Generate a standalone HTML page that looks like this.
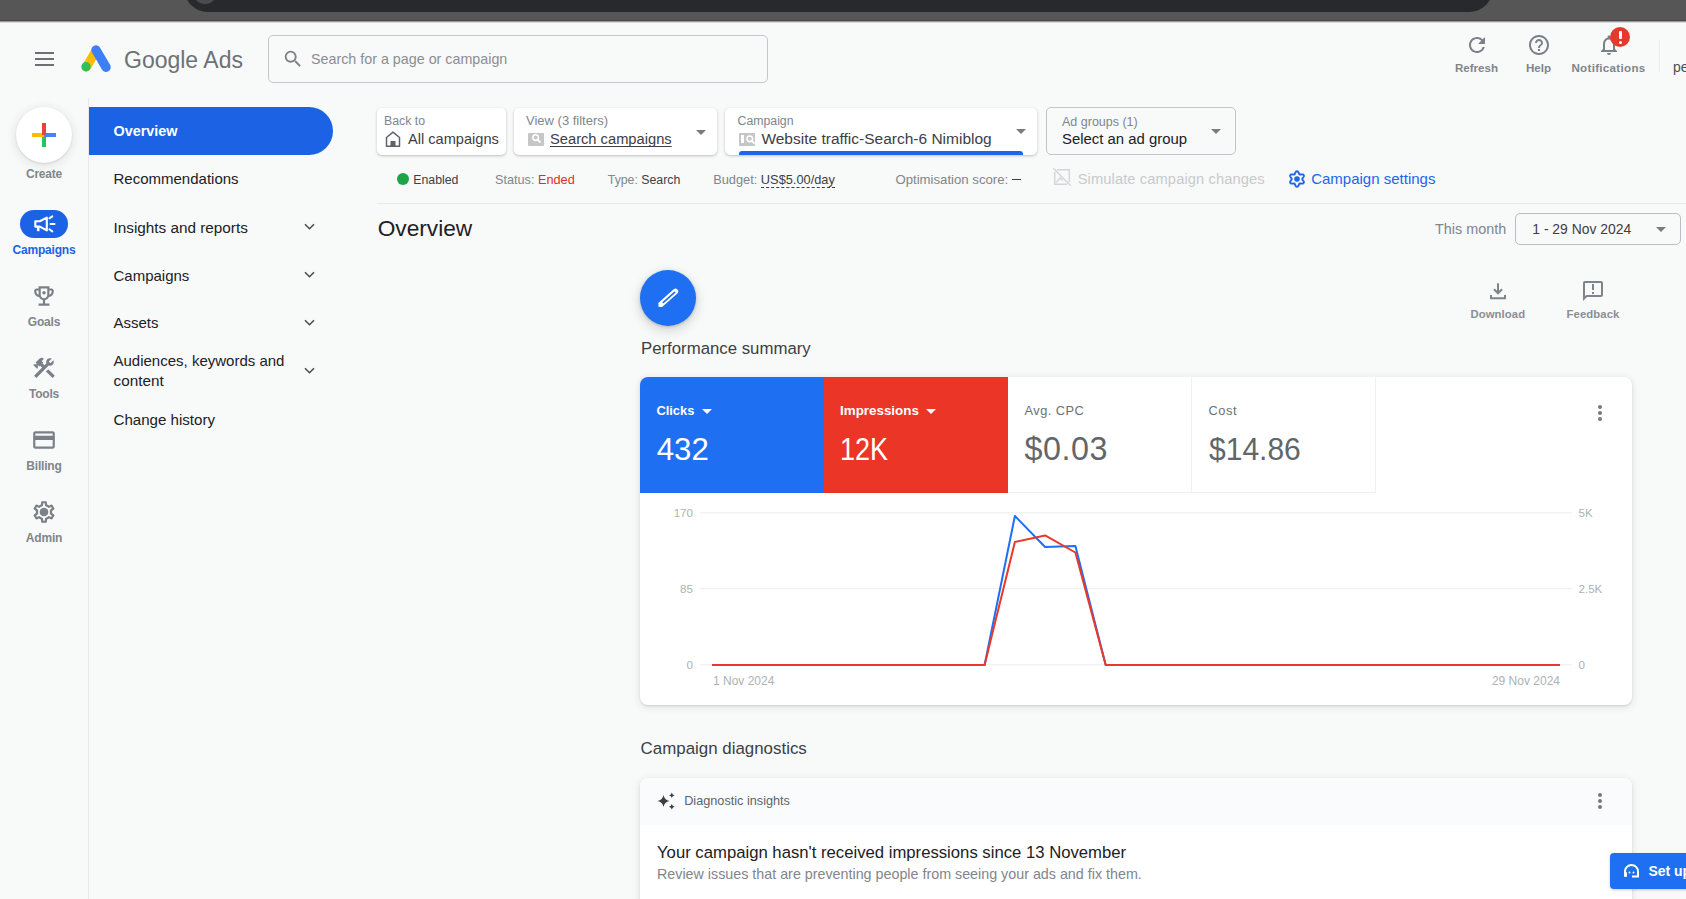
<!DOCTYPE html>
<html><head><meta charset="utf-8"><style>
html,body{margin:0;padding:0;}
body{width:1686px;height:899px;overflow:hidden;position:relative;background:#f8f9f9;font-family:"Liberation Sans",sans-serif;}
.t{position:absolute;white-space:nowrap;line-height:1;}
</style></head><body>
<div style="position:absolute;left:0;top:0;width:1686px;height:21px;background:#565656"></div><div style="position:absolute;left:0;top:20px;width:1686px;height:1px;background:#4a4a4a"></div><div style="position:absolute;left:0;top:21px;width:1686px;height:1px;background:#9a9a9a"></div><div style="position:absolute;left:0;top:22px;width:1686px;height:1px;background:#d9dadb"></div><div style="position:absolute;left:183.5px;top:-36.5px;width:48px;height:48px;background:#28292c;border-radius:50%"></div><div style="position:absolute;left:1445px;top:-36.5px;width:48px;height:48px;background:#28292c;border-radius:50%"></div><div style="position:absolute;left:207px;top:0;width:1262px;height:11.5px;background:#28292c"></div><div style="position:absolute;left:193px;top:-20px;width:24px;height:24px;background:#4a4b4d;border-radius:50%"></div><div style="position:absolute;left:35px;top:52px;width:19px;height:2px;background:#6d7176"></div><div style="position:absolute;left:35px;top:58px;width:19px;height:2px;background:#6d7176"></div><div style="position:absolute;left:35px;top:64px;width:19px;height:2px;background:#6d7176"></div><svg style="position:absolute;left:80px;top:44px" width="32" height="29" viewBox="0 0 32 29">
<path d="M6.5 23 L15.5 7.5" stroke="#fbbc04" stroke-width="9" stroke-linecap="round"/>
<path d="M16 6 L26 23.2" stroke="#3e7ff5" stroke-width="9.4" stroke-linecap="round"/>
<circle cx="6" cy="22.8" r="4.7" fill="#2fbf5b"/>
</svg><div class="t" style="left:124px;top:48.73px;font-size:23px;color:#6d7176;">Google Ads</div>
<div style="position:absolute;left:268px;top:35px;width:498px;height:46px;border:1px solid #c4c7cc;border-radius:5px;background:#f8f9f9"></div><svg style="position:absolute;left:282px;top:48px" width="22" height="22" viewBox="0 0 24 24"><path fill="#7d8187" d="M15.5 14h-.79l-.28-.27A6.47 6.47 0 0 0 16 9.5 6.5 6.5 0 1 0 9.5 16c1.61 0 3.09-.59 4.23-1.57l.27.28v.79l5 4.99L20.49 19l-4.99-5zm-6 0C7.01 14 5 11.99 5 9.5S7.01 5 9.5 5 14 7.01 14 9.5 11.99 14 9.5 14z"/></svg><div class="t" style="left:311px;top:52.10px;font-size:14.3px;color:#8a8e94;">Search for a page or campaign</div>
<svg style="position:absolute;left:1465px;top:33px" width="24" height="24" viewBox="0 0 24 24"><path fill="#7a7f88" d="M17.65 6.35A7.958 7.958 0 0 0 12 4c-4.42 0-7.99 3.58-7.99 8s3.57 8 7.99 8c3.73 0 6.84-2.55 7.73-6h-2.08A5.99 5.99 0 0 1 12 18c-3.31 0-6-2.69-6-6s2.69-6 6-6c1.66 0 3.14.69 4.22 1.78L13 11h7V4l-2.35 2.35z"/></svg><div class="t" style="left:1326.5px;width:300px;text-align:center;top:61.88px;font-size:11.6px;color:#80858c;font-weight:700;">Refresh</div>
<svg style="position:absolute;left:1527px;top:33px" width="24" height="24" viewBox="0 0 24 24"><path fill="#7a7f88" d="M11 18h2v-2h-2v2zm1-16C6.48 2 2 6.48 2 12s4.48 10 10 10 10-4.48 10-10S17.52 2 12 2zm0 18c-4.41 0-8-3.59-8-8s3.59-8 8-8 8 3.59 8 8-3.59 8-8 8zm0-14c-2.21 0-4 1.79-4 4h2c0-1.1.9-2 2-2s2 .9 2 2c0 2-3 1.75-3 5h2c0-2.25 3-2.5 3-5 0-2.21-1.79-4-4-4z"/></svg><div class="t" style="left:1388.5px;width:300px;text-align:center;top:61.88px;font-size:11.6px;color:#80858c;font-weight:700;">Help</div>
<svg style="position:absolute;left:1597px;top:33px" width="24" height="24" viewBox="0 0 24 24"><path fill="#7a7f88" d="M12 22c1.1 0 2-.9 2-2h-4c0 1.1.89 2 2 2zm6-6v-5c0-3.07-1.64-5.64-4.5-6.32V4c0-.83-.67-1.5-1.5-1.5s-1.5.67-1.5 1.5v.68C7.63 5.36 6 7.92 6 11v5l-2 2v1h16v-1l-2-2zm-2 1H8v-6c0-2.48 1.51-4.5 4-4.5s4 2.02 4 4.5v6z"/></svg><div style="position:absolute;left:1610px;top:27px;width:20px;height:20px;border-radius:50%;background:#e5392e"></div><div style="position:absolute;left:1618.5px;top:31px;width:3px;height:8px;background:#fff;border-radius:1px"></div><div style="position:absolute;left:1618.5px;top:41px;width:3px;height:3px;background:#fff;border-radius:50%"></div><div class="t" style="left:1458.5px;width:300px;text-align:center;top:61.88px;font-size:11.6px;color:#80858c;font-weight:700;letter-spacing:0.3px;">Notifications</div>
<div style="position:absolute;left:1659px;top:40px;width:1px;height:32px;background:#eaecee"></div><div class="t" style="left:1673px;top:60.05px;font-size:14px;color:#4b5058;">pe</div>
<div style="position:absolute;left:88px;top:98px;width:1px;height:801px;background:#e6e8eb"></div><div style="position:absolute;left:16px;top:107px;width:56px;height:56px;border-radius:50%;background:#fff;box-shadow:0 1px 2px rgba(60,64,67,.14),0 2px 8px 2px rgba(60,64,67,.09)"></div><div style="position:absolute;left:32px;top:133px;width:12px;height:4px;background:#fbbc04"></div><div style="position:absolute;left:44px;top:133px;width:12px;height:4px;background:#4285f4"></div><div style="position:absolute;left:42px;top:123px;width:4px;height:12px;background:#ea4335"></div><div style="position:absolute;left:42px;top:137px;width:4px;height:10px;background:#2fbf5b"></div><div class="t" style="left:-106px;width:300px;text-align:center;top:167.54px;font-size:12px;color:#80868b;font-weight:700;letter-spacing:-0.2px;">Create</div>
<div style="position:absolute;left:20px;top:210px;width:48px;height:28px;border-radius:14px;background:#1b63e4"></div><svg style="position:absolute;left:32px;top:212px" width="24" height="24" viewBox="0 0 24 24"><path d="M3.3 9.2 H7.8 L14.8 5.6 V18.4 L7.8 14.6 H3.3 Z" fill="none" stroke="#fff" stroke-width="2.1" stroke-linejoin="round"/><path d="M6.2 14.6 V19.2" stroke="#fff" stroke-width="2.6"/><path d="M17.4 6.3 L20.3 4.4 M18.5 12 H22.5 M17.4 17.3 L20.3 19.4" stroke="#fff" stroke-width="2" stroke-linecap="round"/></svg><div class="t" style="left:-106px;width:300px;text-align:center;top:243.54px;font-size:12px;color:#1b63e4;font-weight:700;letter-spacing:-0.2px;">Campaigns</div>
<svg style="position:absolute;left:31px;top:283px" width="26" height="26" viewBox="0 0 24 24"><path fill="#7a7f88" d="M19 5h-2V3H7v2H5c-1.1 0-2 .9-2 2v1c0 2.55 1.92 4.63 4.39 4.94A5.01 5.01 0 0 0 11 15.9V19H7v2h10v-2h-4v-3.1a5.01 5.01 0 0 0 3.61-2.96C19.08 12.63 21 10.55 21 8V7c0-1.1-.9-2-2-2zM5 8V7h2v3.82C5.84 10.4 5 9.3 5 8zm7 6c-1.65 0-3-1.35-3-3V5h6v6c0 1.65-1.35 3-3 3zm7-6c0 1.3-.84 2.4-2 2.82V7h2v1z"/><circle cx="12" cy="9" r="1.6" fill="#7a7f88"/></svg><div class="t" style="left:-106px;width:300px;text-align:center;top:316.04px;font-size:12px;color:#80868b;font-weight:700;letter-spacing:-0.2px;">Goals</div>
<svg style="position:absolute;left:31px;top:355px" width="26" height="26" viewBox="0 0 24 24"><path fill="#7a7f88" d="M13.78 15.17l2.12-2.12 6.09 6.09-2.12 2.12zM17.5 10c1.93 0 3.5-1.57 3.5-3.5 0-.58-.16-1.120-.41-1.6l-2.7 2.7-1.49-1.49 2.7-2.7c-.48-.25-1.02-.41-1.6-.41C15.57 3 14 4.57 14 6.5c0 .41.08.8.21 1.16l-1.85 1.85-1.78-1.78.71-.71-1.41-1.41L12 3.49a3 3 0 0 0-4.24 0L4.22 7.03l1.41 1.41H2.81l-.71.71 3.54 3.54.71-.71V9.15l1.41 1.41.71-.71 1.78 1.78-7.41 7.41 2.12 2.12L16.34 9.790c.36.13.75.21 1.16.21z"/></svg><div class="t" style="left:-106px;width:300px;text-align:center;top:387.54px;font-size:12px;color:#80868b;font-weight:700;letter-spacing:-0.2px;">Tools</div>
<svg style="position:absolute;left:31px;top:427px" width="26" height="26" viewBox="0 0 24 24"><path fill="#7a7f88" d="M20 4H4c-1.11 0-1.99.89-1.99 2L2 18c0 1.11.89 2 2 2h16c1.11 0 2-.89 2-2V6c0-1.11-.89-2-2-2zm0 14H4v-6h16v6zm0-10H4V6h16v2z"/></svg><div class="t" style="left:-106px;width:300px;text-align:center;top:460.04px;font-size:12px;color:#80868b;font-weight:700;letter-spacing:-0.2px;">Billing</div>
<svg style="position:absolute;left:31px;top:499px" width="26" height="26" viewBox="0 0 24 24"><path fill="#7a7f88" d="M19.43 12.98c.04-.32.07-.64.07-.98 0-.34-.03-.66-.07-.98l2.11-1.65c.19-.15.24-.42.12-.64l-2-3.46a.5.5 0 0 0-.61-.22l-2.49 1c-.52-.4-1.08-.73-1.69-.98l-.38-2.65A.488.488 0 0 0 14 2h-4c-.25 0-.46.18-.49.42l-.38 2.65c-.61.25-1.17.59-1.69.98l-2.49-1a.566.566 0 0 0-.18-.03c-.17 0-.34.09-.43.25l-2 3.46c-.13.22-.07.49.12.64l2.11 1.65c-.04.32-.07.65-.07.98 0 .33.03.66.07.98l-2.11 1.65c-.19.15-.24.42-.12.64l2 3.46a.5.5 0 0 0 .61.22l2.49-1c.52.4 1.08.73 1.69.98l.38 2.65c.03.24.24.42.49.42h4c.25 0 .46-.18.49-.42l.38-2.65c.61-.25 1.17-.59 1.69-.98l2.49 1c.06.02.12.03.18.03.17 0 .34-.09.43-.25l2-3.46c.12-.22.07-.49-.12-.64l-2.11-1.65zm-1.98-1.71c.04.31.05.52.05.73 0 .21-.02.43-.05.73l-.14 1.13.89.7 1.08.84-.7 1.21-1.27-.51-1.04-.42-.9.68c-.43.32-.84.56-1.25.73l-1.06.43-.16 1.13-.2 1.35h-1.4l-.19-1.35-.16-1.13-1.06-.43c-.43-.18-.83-.41-1.23-.71l-.91-.7-1.06.43-1.27.51-.7-1.21 1.08-.84.89-.7-.14-1.13c-.03-.31-.05-.54-.05-.74s.02-.43.05-.73l.14-1.13-.89-.7-1.08-.84.7-1.21 1.27.51 1.04.42.9-.68c.43-.32.84-.56 1.25-.73l1.06-.43.16-1.13.2-1.35h1.39l.19 1.35.16 1.13 1.06.43c.43.18.83.41 1.23.71l.91.7 1.06-.43 1.27-.51.7 1.21-1.07.85-.89.7.14 1.13zM12 8c-2.21 0-4 1.79-4 4s1.79 4 4 4 4-1.79 4-4-1.79-4-4-4zm0 6c-1.1 0-2-.9-2-2s.9-2 2-2 2 .9 2 2-.9 2-2 2z"/><circle cx="12" cy="12" r="2.2" fill="#7a7f88"/></svg><div class="t" style="left:-106px;width:300px;text-align:center;top:531.54px;font-size:12px;color:#80868b;font-weight:700;letter-spacing:-0.2px;">Admin</div>
<div style="position:absolute;left:89px;top:107px;width:244px;height:48px;border-radius:0 24px 24px 0;background:#1b63e4"></div><div class="t" style="left:113.5px;top:123.91px;font-size:14.4px;color:#ffffff;font-weight:700;">Overview</div>
<div class="t" style="left:113.5px;top:171.10px;font-size:15px;color:#202124;">Recommendations</div>
<div class="t" style="left:113.5px;top:219.65px;font-size:15.3px;color:#202124;">Insights and reports</div>
<svg style="position:absolute;left:303.5px;top:222.7px" width="12" height="8" viewBox="0 0 12 8"><path d="M1 1.2 L5.5 5.7 L10 1.2" fill="none" stroke="#4a4e53" stroke-width="1.6"/></svg><div class="t" style="left:113.5px;top:267.70px;font-size:15px;color:#202124;">Campaigns</div>
<svg style="position:absolute;left:303.5px;top:270.7px" width="12" height="8" viewBox="0 0 12 8"><path d="M1 1.2 L5.5 5.7 L10 1.2" fill="none" stroke="#4a4e53" stroke-width="1.6"/></svg><div class="t" style="left:113.5px;top:315.40px;font-size:15px;color:#202124;">Assets</div>
<svg style="position:absolute;left:303.5px;top:318.7px" width="12" height="8" viewBox="0 0 12 8"><path d="M1 1.2 L5.5 5.7 L10 1.2" fill="none" stroke="#4a4e53" stroke-width="1.6"/></svg><div class="t" style="left:113.5px;top:353.30px;font-size:15px;color:#202124;">Audiences, keywords and</div>
<svg style="position:absolute;left:303.5px;top:366.7px" width="12" height="8" viewBox="0 0 12 8"><path d="M1 1.2 L5.5 5.7 L10 1.2" fill="none" stroke="#4a4e53" stroke-width="1.6"/></svg><div class="t" style="left:113.5px;top:373.15px;font-size:15.3px;color:#202124;">content</div>
<div class="t" style="left:113.5px;top:411.62px;font-size:15.1px;color:#202124;">Change history</div>
<div style="position:absolute;left:377px;top:107.5px;width:129px;height:47.5px;border-radius:5px;background:#fff;box-shadow:0 1px 2px rgba(60,64,67,.2),0 1px 3px 1px rgba(60,64,67,.08);"></div><div class="t" style="left:384px;top:115.19px;font-size:12.3px;color:#80868b;">Back to</div>
<svg style="position:absolute;left:384px;top:130px" width="18" height="18" viewBox="0 0 18 18"><path d="M2.5 16.2 V7.5 L9 2.2 L15.5 7.5 V16.2 Z" fill="none" stroke="#5f6368" stroke-width="1.5" stroke-linejoin="round"/><rect x="6.5" y="11" width="5" height="5.2" fill="#5f6368"/></svg><div class="t" style="left:408px;top:132.14px;font-size:14.6px;color:#3c4043;">All campaigns</div>
<div style="position:absolute;left:514px;top:107.5px;width:203px;height:47.5px;border-radius:5px;background:#fff;box-shadow:0 1px 2px rgba(60,64,67,.2),0 1px 3px 1px rgba(60,64,67,.08);"></div><div class="t" style="left:526px;top:114.10px;font-size:13px;color:#80868b;">View (3 filters)</div>
<div style="position:absolute;left:528px;top:132.5px;width:16px;height:13px;background:#c6c6c6;border-radius:1px"></div><svg style="position:absolute;left:531px;top:133px" width="11" height="11" viewBox="0 0 11 11"><circle cx="4.6" cy="4.6" r="2.8" fill="none" stroke="#fff" stroke-width="1.6"/><path d="M6.6 6.6 L9.5 9.5" stroke="#fff" stroke-width="1.8"/></svg><div class="t" style="left:550px;top:131.96px;font-size:14.7px;color:#3c4043;text-decoration:underline;text-underline-offset:2px;text-decoration-skip-ink:none;">Search campaigns</div>
<div style="position:absolute;left:696px;top:129.5px;width:0;height:0;border-left:5.0px solid transparent;border-right:5.0px solid transparent;border-top:5.0px solid #777c82"></div><div style="position:absolute;left:725px;top:107.5px;width:312px;height:47.5px;border-radius:5px;background:#fff;box-shadow:0 1px 2px rgba(60,64,67,.2),0 1px 3px 1px rgba(60,64,67,.08);"></div><div class="t" style="left:737.5px;top:115.19px;font-size:12.3px;color:#80868b;">Campaign</div>
<div style="position:absolute;left:739px;top:132.5px;width:16px;height:13px;background:#c6c6c6;border-radius:1px"></div><div style="position:absolute;left:741px;top:135px;width:3px;height:8px;background:#fff"></div><svg style="position:absolute;left:745px;top:133.5px" width="11" height="11" viewBox="0 0 11 11"><circle cx="4.8" cy="4.8" r="2.8" fill="none" stroke="#fff" stroke-width="1.6"/><path d="M6.8 6.8 L9.5 9.5" stroke="#fff" stroke-width="1.8"/></svg><div class="t" style="left:761.4px;top:130.68px;font-size:15.5px;color:#3c4043;">Website traffic-Search-6 Nimiblog</div>
<div style="position:absolute;left:739px;top:151px;width:284px;height:4px;background:#1b66ea;border-radius:3px 3px 0 0"></div><div style="position:absolute;left:1016px;top:129px;width:0;height:0;border-left:5.0px solid transparent;border-right:5.0px solid transparent;border-top:5.0px solid #777c82"></div><div style="position:absolute;left:1045.5px;top:107px;width:188.5px;height:45.5px;border:1px solid #c1c4c9;border-radius:5px"></div><div class="t" style="left:1062px;top:116.12px;font-size:12.5px;color:#80868b;">Ad groups (1)</div>
<div class="t" style="left:1062px;top:131.89px;font-size:14.9px;color:#202124;">Select an ad group</div>
<div style="position:absolute;left:1210.5px;top:129px;width:0;height:0;border-left:5.0px solid transparent;border-right:5.0px solid transparent;border-top:5.0px solid #777c82"></div><div style="position:absolute;left:397px;top:173px;width:12px;height:12px;border-radius:50%;background:#1ea446"></div><div class="t" style="left:413.3px;top:174.49px;font-size:12.3px;color:#3c4043;">Enabled</div>
<div class="t" style="left:495px;top:174.15px;font-size:12.7px;color:#80868b;">Status: <span style="color:#d93025">Ended</span></div>
<div class="t" style="left:607.8px;top:174.49px;font-size:12.3px;color:#80868b;">Type: <span style="color:#3c4043">Search</span></div>
<div class="t" style="left:713.2px;top:174.06px;font-size:12.8px;color:#80868b;">Budget: <span style="color:#3c4043;border-bottom:1px dashed #3c4043">US$5.00/day</span></div>
<div class="t" style="left:895.4px;top:172.93px;font-size:13.2px;color:#80868b;">Optimisation score:<span style="display:inline-block;width:9.5px;height:1.5px;background:#3c4043;margin-left:3.6px;vertical-align:3.7px"></span></div>
<svg style="position:absolute;left:1052px;top:167px" width="20" height="20" viewBox="0 0 20 20"><path d="M5 2.7 H17.3 V15 M2.7 5 V17.3 H15" fill="none" stroke="#d3d5d8" stroke-width="1.5"/><path d="M1.3 1.3 L18.7 18.7" stroke="#d3d5d8" stroke-width="1.5"/><path d="M4.5 15.3 L8 10.8 L10.5 13.5" fill="none" stroke="#d3d5d8" stroke-width="1.4"/></svg><div class="t" style="left:1077.7px;top:171.86px;font-size:14.7px;color:#c8cacd;letter-spacing:0.1px;">Simulate campaign changes</div>
<svg style="position:absolute;left:1286.4px;top:168px" width="22" height="22" viewBox="0 0 22 22"><path d="M16.25 11.00 L16.26 11.14 L16.30 11.28 L16.37 11.42 L16.46 11.57 L16.57 11.73 L16.69 11.90 L16.83 12.08 L16.98 12.27 L17.13 12.47 L17.28 12.68 L17.42 12.90 L17.55 13.13 L17.66 13.36 L17.75 13.59 L17.82 13.83 L17.86 14.06 L17.87 14.28 L17.85 14.49 L17.80 14.69 L17.71 14.88 L17.59 15.04 L17.45 15.19 L17.27 15.31 L17.08 15.42 L16.86 15.50 L16.62 15.55 L16.37 15.59 L16.12 15.61 L15.86 15.61 L15.60 15.60 L15.34 15.57 L15.09 15.54 L14.85 15.51 L14.63 15.48 L14.42 15.46 L14.23 15.44 L14.05 15.44 L13.89 15.45 L13.75 15.49 L13.62 15.55 L13.51 15.63 L13.41 15.73 L13.32 15.86 L13.23 16.01 L13.15 16.19 L13.07 16.38 L12.98 16.59 L12.89 16.81 L12.79 17.04 L12.68 17.28 L12.56 17.51 L12.43 17.74 L12.29 17.95 L12.13 18.15 L11.96 18.32 L11.79 18.47 L11.60 18.59 L11.40 18.68 L11.20 18.73 L11.00 18.75 L10.80 18.73 L10.60 18.68 L10.40 18.59 L10.21 18.47 L10.04 18.32 L9.87 18.15 L9.71 17.95 L9.57 17.74 L9.44 17.51 L9.32 17.28 L9.21 17.04 L9.11 16.81 L9.02 16.59 L8.93 16.38 L8.85 16.19 L8.77 16.01 L8.68 15.86 L8.59 15.73 L8.49 15.63 L8.38 15.55 L8.25 15.49 L8.11 15.45 L7.95 15.44 L7.77 15.44 L7.58 15.46 L7.37 15.48 L7.15 15.51 L6.91 15.54 L6.66 15.57 L6.40 15.60 L6.14 15.61 L5.88 15.61 L5.63 15.59 L5.38 15.55 L5.14 15.50 L4.92 15.42 L4.73 15.31 L4.55 15.19 L4.41 15.04 L4.29 14.88 L4.20 14.69 L4.15 14.49 L4.13 14.28 L4.14 14.06 L4.18 13.83 L4.25 13.59 L4.34 13.36 L4.45 13.13 L4.58 12.90 L4.72 12.68 L4.87 12.47 L5.02 12.27 L5.17 12.08 L5.31 11.90 L5.43 11.73 L5.54 11.57 L5.63 11.42 L5.70 11.28 L5.74 11.14 L5.75 11.00 L5.74 10.86 L5.70 10.72 L5.63 10.58 L5.54 10.43 L5.43 10.27 L5.31 10.10 L5.17 9.92 L5.02 9.73 L4.87 9.53 L4.72 9.32 L4.58 9.10 L4.45 8.87 L4.34 8.64 L4.25 8.41 L4.18 8.17 L4.14 7.94 L4.13 7.72 L4.15 7.51 L4.20 7.31 L4.29 7.13 L4.41 6.96 L4.55 6.81 L4.73 6.69 L4.92 6.58 L5.14 6.50 L5.38 6.45 L5.63 6.41 L5.88 6.39 L6.14 6.39 L6.40 6.40 L6.66 6.43 L6.91 6.46 L7.15 6.49 L7.37 6.52 L7.58 6.54 L7.77 6.56 L7.95 6.56 L8.11 6.55 L8.25 6.51 L8.37 6.45 L8.49 6.37 L8.59 6.27 L8.68 6.14 L8.77 5.99 L8.85 5.81 L8.93 5.62 L9.02 5.41 L9.11 5.19 L9.21 4.96 L9.32 4.72 L9.44 4.49 L9.57 4.26 L9.71 4.05 L9.87 3.85 L10.04 3.68 L10.21 3.53 L10.40 3.41 L10.60 3.32 L10.80 3.27 L11.00 3.25 L11.20 3.27 L11.40 3.32 L11.60 3.41 L11.79 3.53 L11.96 3.68 L12.13 3.85 L12.29 4.05 L12.43 4.26 L12.56 4.49 L12.68 4.72 L12.79 4.96 L12.89 5.19 L12.98 5.41 L13.07 5.62 L13.15 5.81 L13.23 5.99 L13.32 6.14 L13.41 6.27 L13.51 6.37 L13.62 6.45 L13.75 6.51 L13.89 6.55 L14.05 6.56 L14.23 6.56 L14.42 6.54 L14.63 6.52 L14.85 6.49 L15.09 6.46 L15.34 6.43 L15.60 6.40 L15.86 6.39 L16.12 6.39 L16.37 6.41 L16.62 6.45 L16.86 6.50 L17.08 6.58 L17.27 6.69 L17.45 6.81 L17.59 6.96 L17.71 7.13 L17.80 7.31 L17.85 7.51 L17.87 7.72 L17.86 7.94 L17.82 8.17 L17.75 8.41 L17.66 8.64 L17.55 8.87 L17.42 9.10 L17.28 9.32 L17.13 9.53 L16.98 9.73 L16.83 9.92 L16.69 10.10 L16.57 10.27 L16.46 10.43 L16.37 10.58 L16.30 10.72 L16.26 10.86 L16.25 11.00Z" fill="none" stroke="#1b66ea" stroke-width="1.9" stroke-linejoin="round"/><circle cx="11" cy="11" r="2.8" fill="#1b66ea"/></svg><div class="t" style="left:1311.2px;top:171.30px;font-size:15px;color:#1b66ea;">Campaign settings</div>
<div style="position:absolute;left:377px;top:203px;width:1309px;height:1px;background:#e8eaed"></div><div class="t" style="left:377.7px;top:217.38px;font-size:22.7px;color:#202124;">Overview</div>
<div class="t" style="left:1435px;top:222.41px;font-size:14.4px;color:#80868b;">This month</div>
<div style="position:absolute;left:1515px;top:213px;width:164px;height:30px;border:1px solid #babec4;border-radius:5px"></div><div class="t" style="left:1532.3px;top:222.83px;font-size:13.9px;color:#3c4043;">1 - 29 Nov 2024</div>
<div style="position:absolute;left:1656px;top:227px;width:0;height:0;border-left:5.0px solid transparent;border-right:5.0px solid transparent;border-top:5.0px solid #777c82"></div><div style="position:absolute;left:640px;top:270px;width:56px;height:56px;border-radius:50%;background:#1f6ff2;box-shadow:0 1px 3px rgba(60,64,67,.3),0 4px 8px 3px rgba(60,64,67,.12)"></div><svg style="position:absolute;left:656px;top:286px" width="24" height="24" viewBox="0 0 24 24"><path d="M2.3 16.9 L17.64 3.31 A2.8 2.8 0 0 1 21.36 7.49 L6.1 21.1 L2.6 21.1 Z" fill="#fff"/><path d="M7.4 16.4 L18.6 6.3" stroke="#1f6ff2" stroke-width="1.7" stroke-linecap="round"/></svg><div class="t" style="left:641px;top:340.88px;font-size:16.8px;color:#3c4043;">Performance summary</div>
<svg style="position:absolute;left:1486px;top:279px" width="24" height="24" viewBox="0 0 24 24"><path d="M12 4.2 V14.2 M8 10.3 L12 14.3 L16 10.3" stroke="#7f848a" stroke-width="2" fill="none"/><path d="M5 16 V19.3 H19 V16" stroke="#7f848a" stroke-width="2" fill="none"/></svg><div class="t" style="left:1347.8px;width:300px;text-align:center;top:309.23px;font-size:11.3px;color:#8b8f94;font-weight:700;letter-spacing:0.1px;">Download</div>
<svg style="position:absolute;left:1581px;top:279px" width="24" height="24" viewBox="0 0 24 24"><path fill="#7f848a" d="M20 2H4c-1.1 0-1.99.9-1.99 2L2 22l4-4h14c1.1 0 2-.9 2-2V4c0-1.1-.9-2-2-2zm0 14H5.17L4 17.17V4h16v12zM11 5h2v6h-2zm0 8h2v2h-2z"/></svg><div class="t" style="left:1443px;width:300px;text-align:center;top:309.23px;font-size:11.3px;color:#8b8f94;font-weight:700;letter-spacing:0.1px;">Feedback</div>
<div style="position:absolute;left:640px;top:377px;width:992px;height:328px;border-radius:8px;background:#fff;box-shadow:0 1px 2px rgba(60,64,67,.16),0 2px 6px 2px rgba(60,64,67,.08);overflow:hidden"><div style="position:absolute;left:0;top:0;width:184px;height:116px;background:#1f6ff2"></div><div style="position:absolute;left:184px;top:0;width:184px;height:116px;background:#ea3527"></div><div style="position:absolute;left:551px;top:0;width:1px;height:116px;background:#eef0f2"></div><div style="position:absolute;left:735px;top:0;width:1px;height:116px;background:#eef0f2"></div><div style="position:absolute;left:368px;top:115px;width:368px;height:1px;background:#eef0f2"></div></div><div class="t" style="left:656.4px;top:404.88px;font-size:12.9px;color:#ffffff;font-weight:700;">Clicks</div>
<div style="position:absolute;left:701.5px;top:409px;width:0;height:0;border-left:5.25px solid transparent;border-right:5.25px solid transparent;border-top:5.25px solid #fff"></div><div class="t" style="left:656.7px;top:434.09px;font-size:31.2px;color:#ffffff;">432</div>
<div class="t" style="left:840px;top:404.46px;font-size:13.4px;color:#ffffff;font-weight:700;">Impressions</div>
<div style="position:absolute;left:925.5px;top:409px;width:0;height:0;border-left:5.25px solid transparent;border-right:5.25px solid transparent;border-top:5.25px solid #fff"></div><div class="t" style="left:839.5px;top:434.09px;font-size:31.2px;color:#ffffff;transform:scaleX(0.865);transform-origin:0 0;">12K</div>
<div class="t" style="left:1024.6px;top:404.96px;font-size:12.8px;color:#6b6f74;letter-spacing:0.45px;">Avg. CPC</div>
<div class="t" style="left:1024.6px;top:433.16px;font-size:32.3px;color:#62666b;letter-spacing:0.5px;">$0.03</div>
<div class="t" style="left:1208.5px;top:404.96px;font-size:12.8px;color:#6b6f74;letter-spacing:0.6px;">Cost</div>
<div class="t" style="left:1208.5px;top:433.75px;font-size:31.6px;color:#62666b;transform:scaleX(0.95);transform-origin:0 0;">$14.86</div>
<div style="position:absolute;left:1598px;top:405px;width:4px;height:4px;border-radius:50%;background:#75797e"></div><div style="position:absolute;left:1598px;top:411px;width:4px;height:4px;border-radius:50%;background:#75797e"></div><div style="position:absolute;left:1598px;top:417px;width:4px;height:4px;border-radius:50%;background:#75797e"></div><svg style="position:absolute;left:0;top:0" width="1686" height="899">
<path d="M700 512.8 H1572 M700 588.7 H1572 M700 664.8 H1572" stroke="#eceef0" stroke-width="1"/>
<polyline points="712.0,665 984.6,665 1014.9,516 1045.1,547 1075.4,546 1105.7,665 1560.0,665" fill="none" stroke="#1f6ff2" stroke-width="2" stroke-linejoin="round"/>
<polyline points="712.0,665 984.6,665 1014.9,542 1045.1,535.4 1075.4,552.5 1105.7,665 1560.0,665" fill="none" stroke="#e8392c" stroke-width="2" stroke-linejoin="round"/>
</svg><div class="t" style="left:393px;width:300px;text-align:right;top:507.48px;font-size:11.6px;color:#adb1b5;">170</div>
<div class="t" style="left:393px;width:300px;text-align:right;top:583.18px;font-size:11.6px;color:#adb1b5;">85</div>
<div class="t" style="left:393px;width:300px;text-align:right;top:658.88px;font-size:11.6px;color:#adb1b5;">0</div>
<div class="t" style="left:1578.5px;top:507.48px;font-size:11.6px;color:#adb1b5;">5K</div>
<div class="t" style="left:1578.5px;top:583.18px;font-size:11.6px;color:#adb1b5;">2.5K</div>
<div class="t" style="left:1578.5px;top:658.88px;font-size:11.6px;color:#adb1b5;">0</div>
<div class="t" style="left:713px;top:675.14px;font-size:12px;color:#adb1b5;">1 Nov 2024</div>
<div class="t" style="left:1260px;width:300px;text-align:right;top:675.14px;font-size:12px;color:#adb1b5;">29 Nov 2024</div>
<div class="t" style="left:640.6px;top:740.79px;font-size:16.9px;color:#3c4043;">Campaign diagnostics</div>
<div style="position:absolute;left:640px;top:777.5px;width:992px;height:140px;border-radius:8px;background:#fff;box-shadow:0 1px 2px rgba(60,64,67,.16),0 2px 6px 2px rgba(60,64,67,.08);overflow:hidden"><div style="position:absolute;left:0;top:0;width:992px;height:47px;background:#fafbfc"></div></div><svg style="position:absolute;left:650px;top:786px" width="30" height="30" viewBox="0 0 30 30"><path fill="#3c4043" d="M13.5 9 Q14.4 14.1 19.5 15 Q14.4 15.9 13.5 21 Q12.6 15.9 7.5 15 Q12.6 14.1 13.5 9Z M21.8 6.3999999999999995 Q22.25 8.75 24.6 9.2 Q22.25 9.649999999999999 21.8 12.0 Q21.35 9.649999999999999 19.0 9.2 Q21.35 8.75 21.8 6.3999999999999995Z M21.8 18.0 Q22.25 20.35 24.6 20.8 Q22.25 21.25 21.8 23.6 Q21.35 21.25 19.0 20.8 Q21.35 20.35 21.8 18.0Z"/></svg><div class="t" style="left:684.2px;top:794.95px;font-size:12.7px;color:#5f6368;">Diagnostic insights</div>
<div style="position:absolute;left:1598px;top:793px;width:4px;height:4px;border-radius:50%;background:#75797e"></div><div style="position:absolute;left:1598px;top:799px;width:4px;height:4px;border-radius:50%;background:#75797e"></div><div style="position:absolute;left:1598px;top:805px;width:4px;height:4px;border-radius:50%;background:#75797e"></div><div class="t" style="left:657px;top:844.96px;font-size:16.7px;color:#202124;">Your campaign hasn't received impressions since 13 November</div>
<div class="t" style="left:657px;top:867.40px;font-size:14.3px;color:#80868b;">Review issues that are preventing people from seeing your ads and fix them.</div>
<div style="position:absolute;left:1610px;top:853px;width:90px;height:36px;border-radius:4px;background:#1f6ff2;box-shadow:0 1px 3px rgba(0,0,0,.2)"></div><svg style="position:absolute;left:1623px;top:863px" width="17" height="16" viewBox="0 0 17 16"><path d="M2 12 V8.5 A6.5 6.5 0 0 1 15 8.5 V13.5 H9" fill="none" stroke="#fff" stroke-width="2"/><rect x="1" y="9" width="3" height="5" rx="1" fill="#fff"/><circle cx="6.5" cy="9.5" r="1" fill="#fff"/><circle cx="10.5" cy="9.5" r="1" fill="#fff"/></svg><div class="t" style="left:1648.4px;top:864.05px;font-size:14px;color:#ffffff;font-weight:700;">Set up</div>

</body></html>
